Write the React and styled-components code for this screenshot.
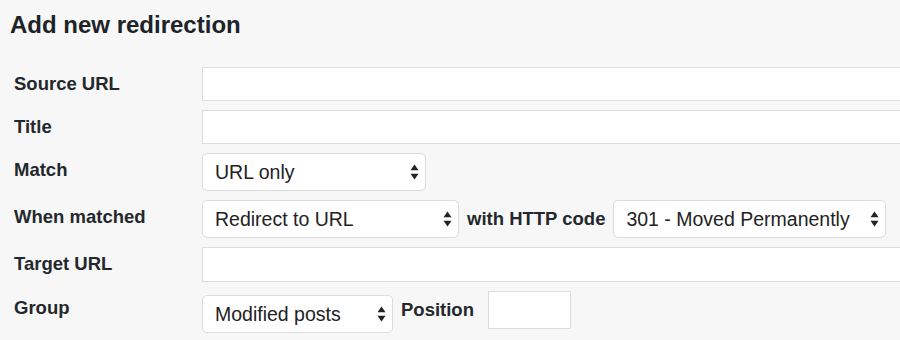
import styled, { createGlobalStyle } from "styled-components";

const GlobalStyle = createGlobalStyle`
  html, body {
    margin: 0;
    padding: 0;
    background: #f7f7f7;
    overflow: hidden;
  }
  body {
    font-family: "Liberation Sans", Arial, sans-serif;
    color: #23282d;
  }
`;

function Arrows() {
  return (
    <svg width="9" height="16" viewBox="0 0 9 16">
      <path d="M4.5 0.5 L8.5 6.3 L0.5 6.3 Z" fill="#222" />
      <path d="M4.5 15.5 L8.5 9.7 L0.5 9.7 Z" fill="#222" />
    </svg>
  );
}

function Select({ width, value, offset }) {
  return (
    <SelectWrap width={width} offset={offset}>
      <SelectBox defaultValue={value}>
        <option>{value}</option>
      </SelectBox>
      <ArrowIcon>
        <Arrows />
      </ArrowIcon>
    </SelectWrap>
  );
}

export default function App() {
  return (
    <>
      <GlobalStyle />
      <Page>
        <Heading>Add new redirection</Heading>
        <Form>
          <Label>Source URL</Label>
          <TextInput />

          <Label>Title</Label>
          <TextInput />

          <Label>Match</Label>
          <Controls>
            <Select width={224} value="URL only" />
          </Controls>

          <Label>When matched</Label>
          <Controls>
            <Select width={257} value="Redirect to URL" />
            <Inline>with HTTP code</Inline>
            <Select width={273} value="301 - Moved Permanently" />
          </Controls>

          <Label>Target URL</Label>
          <TextInput tall />

          <Label>Group</Label>
          <Controls>
            <Select width={191} value="Modified posts" offset={4} />
            <Inline>Position</Inline>
            <SmallInput />
          </Controls>
        </Form>
      </Page>
    </>
  );
}

const Page = styled.div`
  width: 900px;
  height: 340px;
  box-sizing: border-box;
  padding: 11px 0 0 10px;
`;

const Heading = styled.h2`
  margin: 0;
  font-size: 24px;
  line-height: 28px;
  font-weight: 700;
  color: #1d2327;
`;

const Form = styled.div`
  display: grid;
  grid-template-columns: 188px 720px;
  row-gap: 9px;
  margin-top: 28px;
  padding-left: 4px;
`;

const Label = styled.div`
  align-self: start;
  font-size: 18.5px;
  line-height: 34px;
  font-weight: 700;
  color: #23282d;
`;

const TextInput = styled.input`
  display: block;
  box-sizing: border-box;
  width: 720px;
  height: ${(p) => (p.tall ? "35px" : "34px")};
  background: #fff;
  border: 1px solid #dcdcdc;
  border-radius: 0;
  margin: 0;
  outline: none;
`;

const Controls = styled.div`
  display: flex;
  align-items: flex-start;
`;

const Inline = styled.span`
  font-size: 18.5px;
  font-weight: 700;
  line-height: 38px;
  margin: 0 8px 0 8px;
  white-space: nowrap;
  color: #23282d;
`;

const SelectWrap = styled.div`
  position: relative;
  width: ${(p) => p.width}px;
  height: 38px;
  margin-top: ${(p) => p.offset || 0}px;
  flex: none;
`;

const SelectBox = styled.select`
  appearance: none;
  -webkit-appearance: none;
  box-sizing: border-box;
  width: 100%;
  height: 100%;
  margin: 0;
  padding: 0 24px 0 12px;
  background: #fff;
  border: 1px solid #dcdcdc;
  border-radius: 5px;
  font-family: "Liberation Sans", Arial, sans-serif;
  font-size: 19.5px;
  color: #222;
  outline: none;
`;

const ArrowIcon = styled.span`
  position: absolute;
  right: 7px;
  top: 11px;
  display: flex;
  pointer-events: none;
`;

const SmallInput = styled.input`
  box-sizing: border-box;
  width: 83px;
  height: 38px;
  margin: 0 0 0 6px;
  background: #fff;
  border: 1px solid #dcdcdc;
  border-radius: 0;
  outline: none;
`;
